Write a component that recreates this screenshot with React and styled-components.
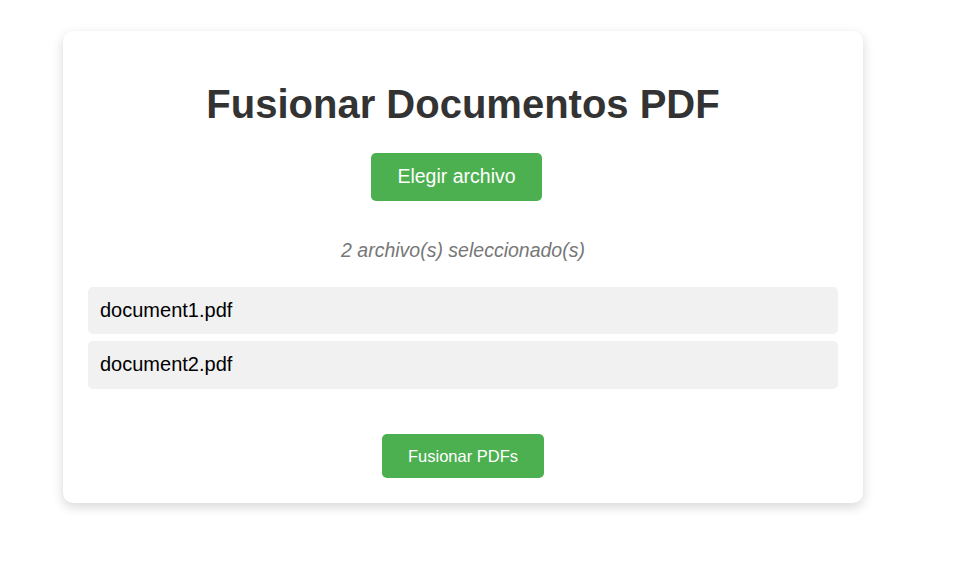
import React from "react";
import styled, { createGlobalStyle } from "styled-components";

const GlobalStyle = createGlobalStyle`
  body {
    margin: 0;
    background: #ffffff;
    font-family: "Liberation Sans", Arial, sans-serif;
  }
`;

const Page = styled.div`
  padding: 31px 0 40px 63px;
`;

const Card = styled.div`
  width: 800px;
  box-sizing: border-box;
  padding: 20px 25px 25px;
  background: #ffffff;
  border-radius: 10px;
  box-shadow: 0 4px 12px rgba(0, 0, 0, 0.16);
  display: flex;
  flex-direction: column;
  align-items: center;
`;

const Title = styled.h1`
  margin: 30px 0 26px;
  font-size: 40px;
  line-height: 46px;
  font-weight: 700;
  color: #333333;
  text-align: center;
`;

const GreenButton = styled.button`
  display: inline-block;
  border: none;
  border-radius: 5px;
  background: #4caf50;
  color: #ffffff;
  font-family: "Liberation Sans", Arial, sans-serif;
  font-size: ${(p) => p.$size};
  line-height: ${(p) => p.$line};
  padding: 12px 26px;
  cursor: pointer;
`;

const PickButton = styled(GreenButton)`
  margin-right: 13px;
`;

const Count = styled.p`
  margin: 38px 0 26px;
  font-size: 19.5px;
  line-height: 22px;
  font-style: italic;
  color: #777777;
  text-align: center;
`;

const FileList = styled.ul`
  list-style: none;
  margin: 0 0 45px;
  padding: 0;
  width: 100%;
  display: flex;
  flex-direction: column;
  gap: 7px;
`;

const FileItem = styled.li`
  background: #f1f1f1;
  border-radius: 5px;
  padding: 12px 12px;
  font-size: 20px;
  line-height: 23.5px;
  color: #000000;
`;

const files = ["document1.pdf", "document2.pdf"];

export default function App() {
  return (
    <>
      <GlobalStyle />
      <Page>
        <Card>
          <Title>Fusionar Documentos PDF</Title>
          <PickButton $size="19.5px" $line="23.5px">
            Elegir archivo
          </PickButton>
          <Count>{files.length} archivo(s) seleccionado(s)</Count>
          <FileList>
            {files.map((f) => (
              <FileItem key={f}>{f}</FileItem>
            ))}
          </FileList>
          <GreenButton $size="16.5px" $line="20px">
            Fusionar PDFs
          </GreenButton>
        </Card>
      </Page>
    </>
  );
}
